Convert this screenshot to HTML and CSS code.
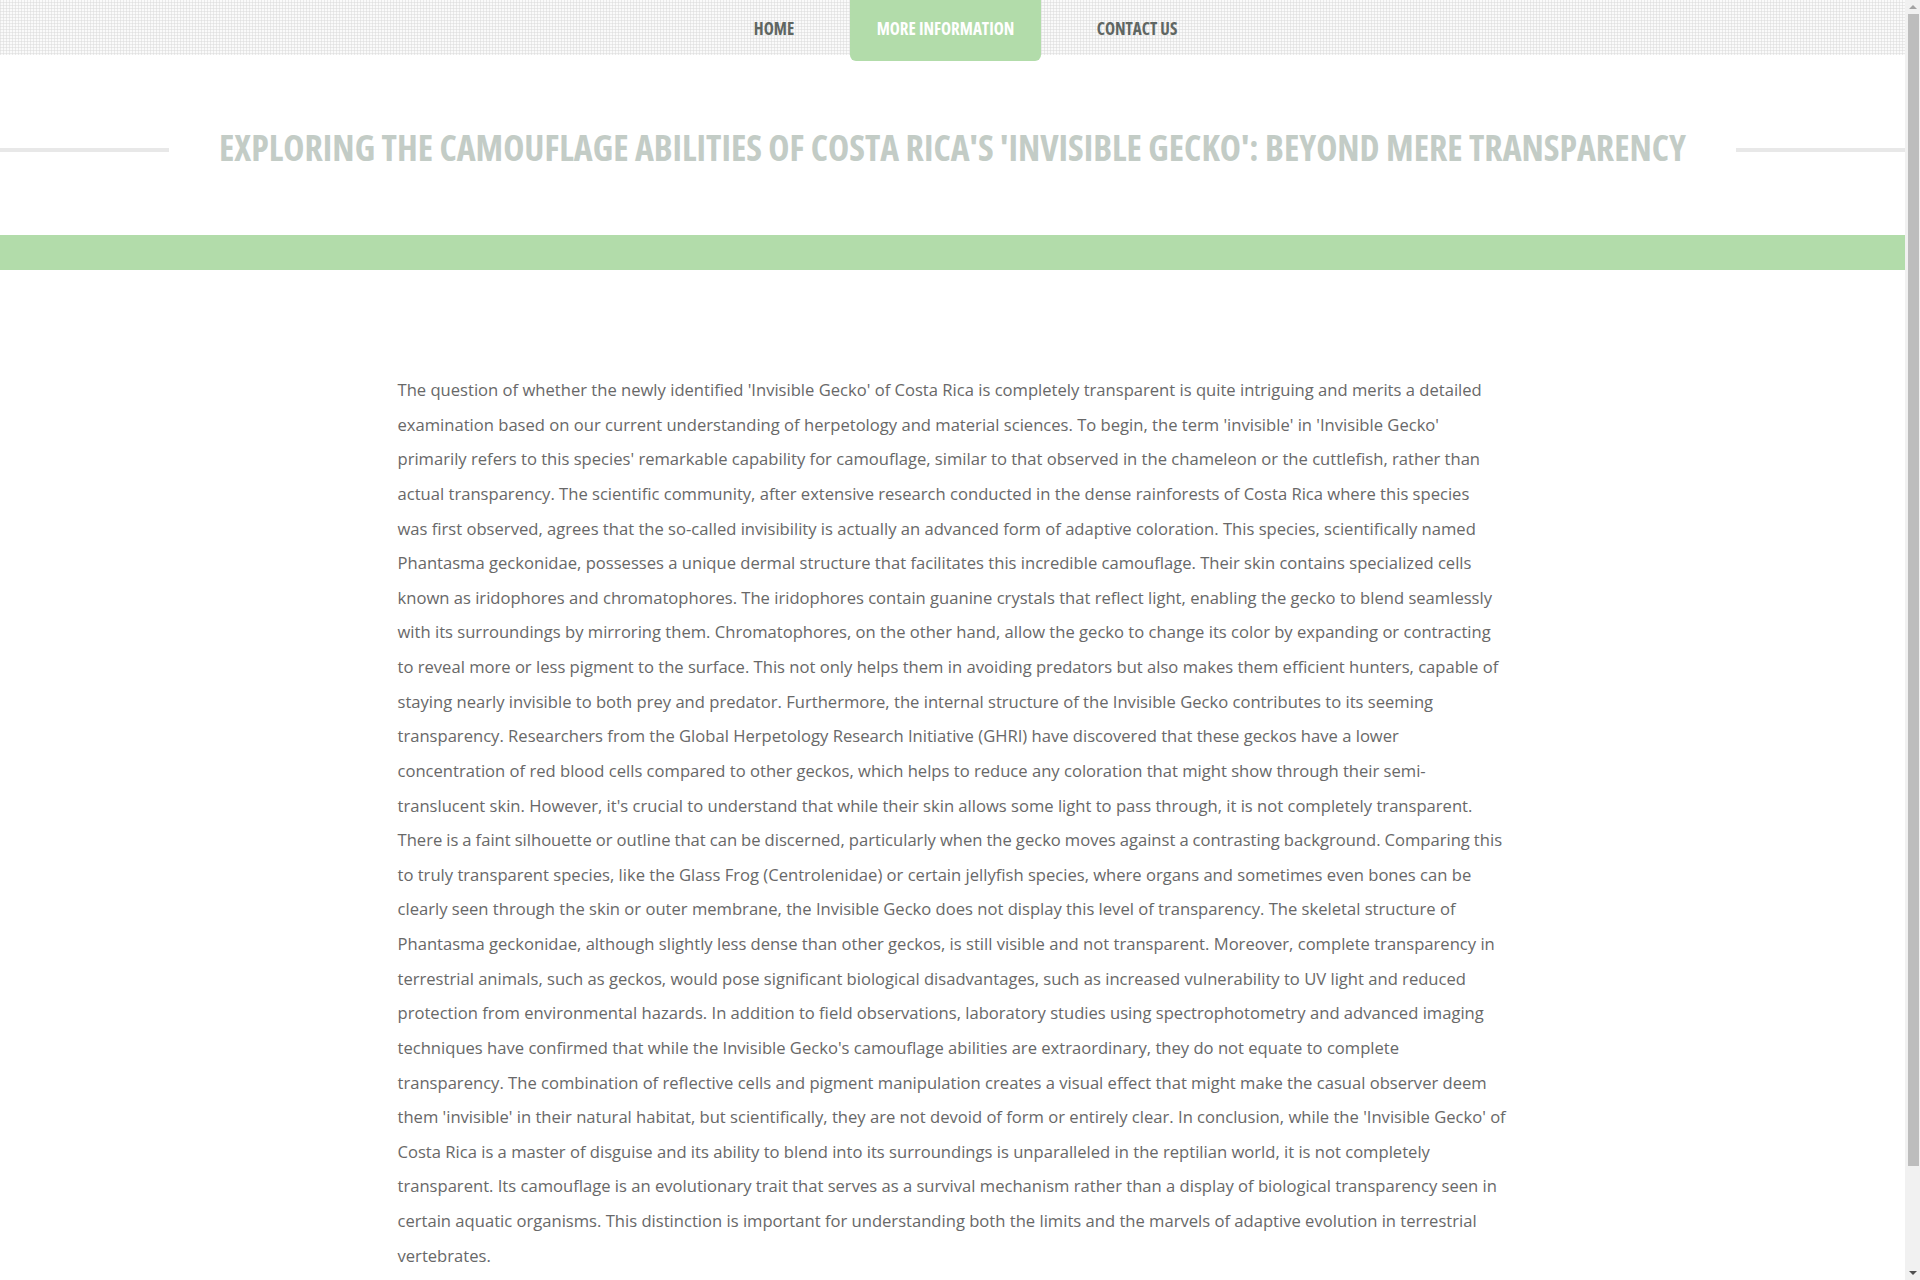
FILE: index.html
```html
<!DOCTYPE html>
<html lang="en">
<head>
<meta charset="utf-8">
<title>Invisible Gecko</title>
<link rel="stylesheet" href="styles.css">
</head>
<body>
<div class="page">
<header class="topbar">
  <nav class="nav">
    <a class="nav-item home" href="#">HOME</a>
    <a class="nav-item active" href="#">MORE INFORMATION</a>
    <a class="nav-item contact" href="#">CONTACT US</a>
  </nav>
</header>
<section class="title-row">
  <span class="rule"></span>
  <h1 class="title">EXPLORING THE CAMOUFLAGE ABILITIES OF COSTA RICA'S 'INVISIBLE GECKO': BEYOND MERE TRANSPARENCY</h1>
  <span class="rule"></span>
</section>
<div class="band"></div>
<main class="content">
  <p>The question of whether the newly identified 'Invisible Gecko' of Costa Rica is completely transparent is quite intriguing and merits a detailed examination based on our current understanding of herpetology and material sciences. To begin, the term 'invisible' in 'Invisible Gecko' primarily refers to this species' remarkable capability for camouflage, similar to that observed in the chameleon or the cuttlefish, rather than actual transparency. The scientific community, after extensive research conducted in the dense rainforests of Costa Rica where this species was&nbsp;first observed, agrees that the so-called invisibility is actually an advanced form of adaptive coloration. This species, scientifically named Phantasma geckonidae, possesses a unique dermal structure that facilitates this incredible camouflage. Their skin contains specialized cells known as iridophores and chromatophores. The iridophores contain guanine crystals that reflect light, enabling the gecko to blend seamlessly with its surroundings by mirroring them. Chromatophores, on the other hand, allow the gecko to change its color by expanding or contracting to reveal more or less pigment to the surface. This not only helps them in avoiding predators but also makes them efficient hunters, capable of staying nearly invisible to both prey and predator. Furthermore, the internal structure of the Invisible Gecko contributes to its seeming transparency. Researchers from the Global Herpetology Research Initiative (GHRI) have discovered that these geckos have a lower concentration of red blood cells compared to other geckos, which helps to reduce any coloration that might show through their semi-translucent skin. However, it's crucial to understand that while their skin allows some light to pass through, it is not completely transparent. <span class="tight">There is a faint silhouette or outline that can be discerned, particularly when the gecko moves against a contrasting background. Comparing this</span> to truly transparent species, like the Glass Frog (Centrolenidae) or certain jellyfish species, where organs and sometimes even bones can be clearly seen through the skin or outer membrane, the Invisible Gecko does not display this level of transparency. The skeletal structure of Phantasma geckonidae, although slightly less dense than other geckos, is still visible and not transparent. Moreover, complete transparency in terrestrial animals, such as geckos, would pose significant biological disadvantages, such as increased vulnerability to UV light and reduced protection from environmental hazards. In addition to field observations, laboratory studies using spectrophotometry and advanced imaging techniques have confirmed that while the Invisible Gecko's camouflage abilities are extraordinary, they do not equate to complete transparency. The combination of reflective cells and pigment manipulation creates a visual effect that might make the casual observer deem them 'invisible' in their natural habitat, but scientifically, they are not devoid of form or entirely clear. In conclusion, while the 'Invisible Gecko' of Costa Rica is a master of disguise and its ability to blend into its surroundings is unparalleled in the reptilian world, it is not completely transparent. Its camouflage is an evolutionary trait that serves as a survival mechanism rather than a display of biological transparency seen in certain aquatic organisms. This distinction is important for understanding both the limits and the marvels of adaptive evolution in terrestrial vertebrates.</p>
</main>
</div>
<div class="scrollbar" aria-hidden="true">
  <span class="arrow up"></span>
  <span class="thumb"></span>
  <span class="arrow down"></span>
</div>
</body>
</html>
```
FILE: styles.css
```css
html, body {
  margin: 0;
  padding: 0;
  background: #ffffff;
}
body {
  font-family: "Open Sans", "Liberation Sans", sans-serif;
  color: #6b6b6b;
}
.page {
  margin-right: 15px;
  padding-bottom: 160px;
}
.topbar {
  height: 55px;
  background-color: #fafafa;
  background-image:
    linear-gradient(90deg, rgba(220,220,220,0.55) 1px, transparent 1px),
    linear-gradient(0deg, rgba(220,220,220,0.55) 1px, transparent 1px);
  background-size: 3px 3px;
}
.nav {
  display: flex;
  justify-content: center;
  align-items: flex-start;
  gap: 29px;
  padding-left: 26px;
  height: 55px;
}
.nav-item {
  display: block;
  text-align: center;
  line-height: 57px;
  height: 55px;
  font-family: "Open Sans", sans-serif;
  font-stretch: 75%;
  font-weight: 700;
  font-size: 17px;
  color: #5f6662;
  text-decoration: none;
  white-space: nowrap;
}
.nav-item.home {
  width: 94px;
}
.nav-item.contact {
  width: 134px;
}
.nav-item.active {
  width: 191px;
  height: 61px;
  background: #b2dcaa;
  color: #ffffff;
  border-radius: 0 0 6px 6px;
}
.title-row {
  display: flex;
  align-items: center;
  margin-top: 72px;
  height: 40px;
}
.rule {
  flex: 1;
  height: 4px;
  background: #e8e8e8;
  margin-top: 6px;
}
.title {
  margin: 0 50px;
  font-family: "Open Sans", sans-serif;
  font-stretch: 75%;
  font-weight: 700;
  font-size: 35.8px;
  line-height: 40px;
  color: #c3ccc6;
  white-space: nowrap;
}
.band {
  height: 35px;
  background: #b2dcaa;
  margin-top: 68px;
}
.content {
  width: 1110px;
  margin: 0 auto;
  padding-top: 103px;
}
.content p {
  margin: 0;
  font-size: 16.6px;
  line-height: 34.63px;
  color: #686868;
}
.content .tight {
  word-spacing: -0.3px;
}
.scrollbar {
  position: fixed;
  top: 0;
  right: 0;
  width: 15px;
  height: 100vh;
  background: #f1f1f1;
  display: flex;
  flex-direction: column;
  align-items: center;
}
.arrow {
  width: 0;
  height: 0;
  border-left: 4px solid transparent;
  border-right: 4px solid transparent;
  margin: 5px 0;
}
.arrow.up {
  border-bottom: 4px solid #a3a3a3;
}
.arrow.down {
  border-top: 4px solid #505050;
}
.thumb {
  width: 11px;
  margin-left: 1px;
  height: 1152px;
  background: #bdbdbd;
}
.scrollbar .arrow.down {
  margin-top: auto;
}
```
